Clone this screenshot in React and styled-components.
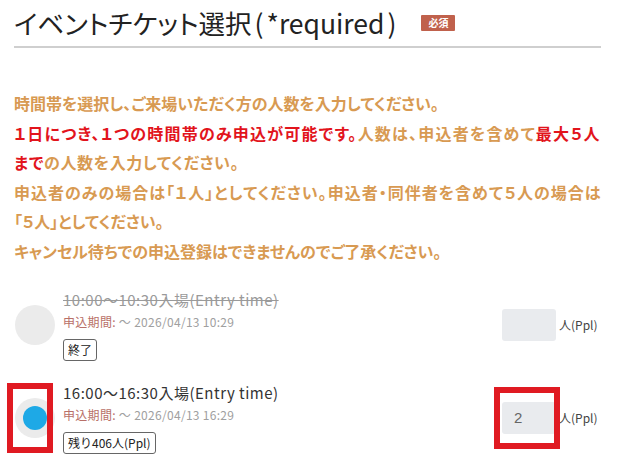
import React from 'react';
import styled, { createGlobalStyle } from 'styled-components';

const GlobalStyle = createGlobalStyle`
	html, body {
		margin: 0;
		padding: 0;
		background: #fff;
	}
	body {
		font-family: "Noto Sans CJK JP", "Noto Sans", sans-serif;
		color: #333;
	}
`

const Page = styled.div`
	width: 620px;
	box-sizing: border-box;
	padding: 5px 19px 0 14px;
`

const Header = styled.div`
	display: flex;
	align-items: center;
	gap: 22px;
	padding-bottom: 5px;
	border-bottom: 2px solid #cfcfcf;
`

const Title = styled.h2`
	margin: 0;
	font-size: 26.5px;
	line-height: 36px;
	font-weight: 400;
	color: #222;
	font-feature-settings: "palt";
	span {
		margin: 0 3px;
	}
`

const Badge = styled.span`
	display: inline-block;
	background-color: #c0614c;
	color: #fff;
	font-size: 10px;
	font-weight: 700;
	line-height: 16px;
	padding: 0 7px;
	border-radius: 1px;
`

const Notice = styled.div`
	margin-top: 41px;
	font-size: 16px;
	font-weight: 700;
	line-height: 29.6px;
	color: #d89a52;
	font-feature-settings: "palt";
	white-space: nowrap;
`

const Line = styled.p`
	margin: 0;
	letter-spacing: ${(p) => p.$track || 0}px;
`

const Em = styled.span`
	color: #e2141c;
`

const SlotList = styled.div`
	margin-top: 22px;
	display: flex;
	flex-direction: column;
	gap: 21px;
`

const Slot = styled.div`
	display: grid;
	grid-template-columns: 40px 1fr auto;
	column-gap: 8px;
	align-items: center;
	padding-left: 1px;
`

const Highlight = styled.div`
	position: relative;
	display: flex;
	align-items: center;
	&::after {
		content: '';
		position: absolute;
		top: ${(p) => p.$top}px;
		bottom: ${(p) => p.$bottom}px;
		left: ${(p) => p.$left}px;
		right: ${(p) => p.$right}px;
		border: 6px solid #e01a22;
		pointer-events: none;
	}
`

const Radio = styled.span`
	width: 40px;
	height: 40px;
	border-radius: 50%;
	background-color: #ebebeb;
	display: flex;
	align-items: center;
	justify-content: center;
	&::before {
		content: '';
		width: 24px;
		height: 24px;
		border-radius: 50%;
		background-color: ${(p) => (p.$checked ? '#1ea9e6' : 'transparent')};
	}
`

const Info = styled.div`
	display: flex;
	flex-direction: column;
	align-items: flex-start;
`

const SlotTime = styled.div`
	font-size: 15px;
	line-height: 22px;
	color: ${(p) => (p.$closed ? '#9a9a9a' : '#333')};
	text-decoration: ${(p) => (p.$closed ? 'line-through' : 'none')};
	letter-spacing: 0.5px;
`

const Period = styled.div`
	font-size: 12px;
	line-height: 22px;
	color: #a0a0a0;
	letter-spacing: 0.3px;
	span {
		color: #b87068;
	}
`

const Tag = styled.span`
	margin-top: 6px;
	font-size: 12px;
	line-height: 18px;
	padding: 1px 4px;
	border: 1px solid #666;
	border-radius: 3px;
	color: #222;
`

const Count = styled.div`
	display: flex;
	align-items: center;
	gap: 3px;
`

const CountInput = styled.input`
	width: 54px;
	height: 32px;
	box-sizing: border-box;
	border: none;
	border-radius: 3px;
	background-color: #e9ebee;
	padding: 0 12px;
	font-family: "Liberation Sans", "Noto Sans", sans-serif;
	font-size: 15px;
	color: #666;
	outline: none;
`

const Unit = styled.span`
	font-size: 12px;
	color: #444;
	width: 42px;
`

const slots = [
	{
		time: '10:00〜10:30入場(Entry time)',
		until: '2026/04/13 10:29',
		tag: '終了',
		closed: true,
		value: '',
	},
	{
		time: '16:00〜16:30入場(Entry time)',
		until: '2026/04/13 16:29',
		tag: '残り406人(Ppl)',
		closed: false,
		value: '2',
		selected: true,
	},
]

function SlotRow({ slot }) {
	const radio = <Radio $checked={slot.selected} />
	const input = <CountInput defaultValue={slot.value} />

	return (
		<Slot>
			{slot.selected ? (
				<Highlight $top={-15} $bottom={-15} $left={-8} $right={2}>{radio}</Highlight>
			) : (
				radio
			)}
			<Info>
				<SlotTime $closed={slot.closed}>{slot.time}</SlotTime>
				<Period>
					<span>申込期間:</span> 〜 {slot.until}
				</Period>
				<Tag>{slot.tag}</Tag>
			</Info>
			<Count>
				{slot.selected ? (
					<Highlight $top={-15} $bottom={-15} $left={-8} $right={-4}>{input}</Highlight>
				) : (
					input
				)}
				<Unit>人(Ppl)</Unit>
			</Count>
		</Slot>
	)
}

export default function App() {
	return (
		<Page>
			<GlobalStyle />
			<Header>
				<Title>
					イベントチケット選択<span>(</span>*required<span>)</span>
				</Title>
				<Badge>必須</Badge>
			</Header>
			<Notice>
				<Line>時間帯を選択し、ご来場いただく方の人数を入力してください。</Line>
				<Line $track={1.2}>
					<Em>１日につき、１つの時間帯のみ申込が可能です。</Em>人数は、申込者を含めて<Em>最大５人</Em>
				</Line>
				<Line $track={0.6}>
					<Em>まで</Em>の人数を入力してください。
				</Line>
				<Line $track={1}>申込者のみの場合は「１人」としてください。申込者・同伴者を含めて５人の場合は</Line>
				<Line>「５人」としてください。</Line>
				<Line>キャンセル待ちでの申込登録はできませんのでご了承ください。</Line>
			</Notice>
			<SlotList>
				{slots.map((slot) => (
					<SlotRow key={slot.time} slot={slot} />
				))}
			</SlotList>
		</Page>
	)
}
